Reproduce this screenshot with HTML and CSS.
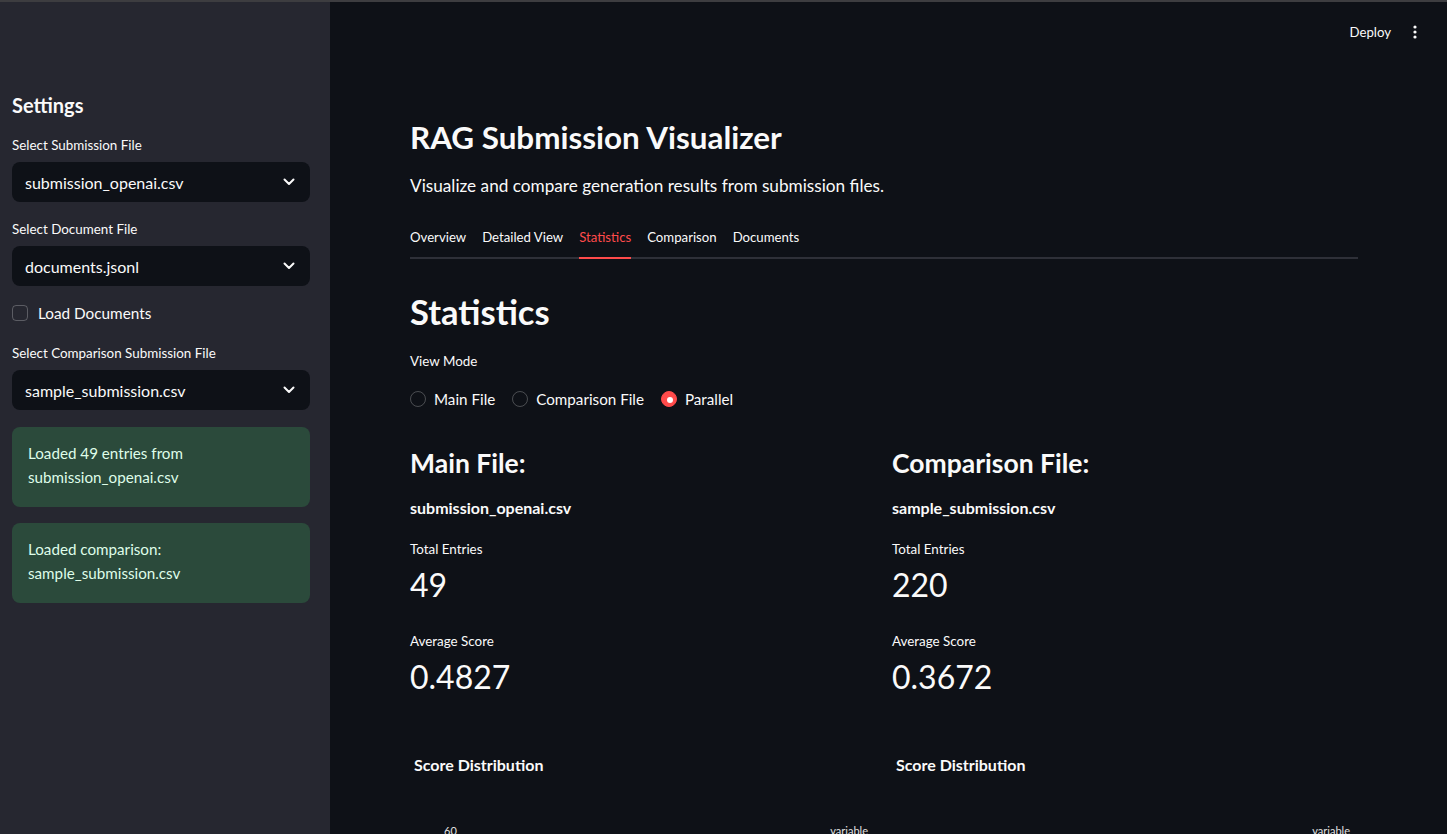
FILE: index.html
```html
<!DOCTYPE html>
<html>
<head>
<meta charset="utf-8">
<link rel="stylesheet" href="styles.css">
</head>
<body>
<div class="topline"></div>
<div class="app">
  <aside class="sidebar">
    <h2 class="side-title">Settings</h2>
    <div class="field">
      <div class="label">Select Submission File</div>
      <div class="select"><span>submission_openai.csv</span>
        <svg class="chev" width="12" height="8" viewBox="0 0 12 8"><path d="M1.5 1.5 L6 6 L10.5 1.5" fill="none" stroke="#fafafa" stroke-width="2" stroke-linecap="round" stroke-linejoin="round"/></svg>
      </div>
    </div>
    <div class="field">
      <div class="label">Select Document File</div>
      <div class="select"><span>documents.jsonl</span>
        <svg class="chev" width="12" height="8" viewBox="0 0 12 8"><path d="M1.5 1.5 L6 6 L10.5 1.5" fill="none" stroke="#fafafa" stroke-width="2" stroke-linecap="round" stroke-linejoin="round"/></svg>
      </div>
    </div>
    <label class="checkbox"><span class="box"></span><span>Load Documents</span></label>
    <div class="field">
      <div class="label">Select Comparison Submission File</div>
      <div class="select"><span>sample_submission.csv</span>
        <svg class="chev" width="12" height="8" viewBox="0 0 12 8"><path d="M1.5 1.5 L6 6 L10.5 1.5" fill="none" stroke="#fafafa" stroke-width="2" stroke-linecap="round" stroke-linejoin="round"/></svg>
      </div>
    </div>
    <div class="success">Loaded 49 entries from submission_openai.csv</div>
    <div class="success">Loaded comparison: sample_submission.csv</div>
  </aside>
  <main class="main">
    <header class="header">
      <span class="deploy">Deploy</span>
      <svg class="kebab" width="4" height="14" viewBox="0 0 4 14"><circle cx="2" cy="2" r="1.6" fill="#fafafa"/><circle cx="2" cy="7" r="1.6" fill="#fafafa"/><circle cx="2" cy="12" r="1.6" fill="#fafafa"/></svg>
    </header>
    <div class="content">
      <h1 class="title">RAG Submission Visualizer</h1>
      <p class="subtitle">Visualize and compare generation results from submission files.</p>
      <nav class="tabs">
        <span class="tab">Overview</span>
        <span class="tab">Detailed View</span>
        <span class="tab active">Statistics</span>
        <span class="tab">Comparison</span>
        <span class="tab">Documents</span>
      </nav>
      <h1 class="section">Statistics</h1>
      <div class="label main-label">View Mode</div>
      <div class="radios">
        <span class="radio"><span class="circle"></span>Main File</span>
        <span class="radio"><span class="circle"></span>Comparison File</span>
        <span class="radio"><span class="circle on"></span>Parallel</span>
      </div>
      <div class="cols">
        <div class="col">
          <h3 class="col-title">Main File:</h3>
          <div class="fname">submission_openai.csv</div>
          <div class="metric-label">Total Entries</div>
          <div class="metric-value">49</div>
          <div class="metric-label avg">Average Score</div>
          <div class="metric-value">0.4827</div>
          <div class="chart">
            <div class="chart-title">Score Distribution</div>
            <div class="chart-axis"><span class="tick">60</span><span class="legend">variable</span></div>
          </div>
        </div>
        <div class="col">
          <h3 class="col-title">Comparison File:</h3>
          <div class="fname">sample_submission.csv</div>
          <div class="metric-label">Total Entries</div>
          <div class="metric-value">220</div>
          <div class="metric-label avg">Average Score</div>
          <div class="metric-value">0.3672</div>
          <div class="chart">
            <div class="chart-title">Score Distribution</div>
            <div class="chart-axis"><span class="tick"></span><span class="legend">variable</span></div>
          </div>
        </div>
      </div>
    </div>
  </main>
</div>
</body>
</html>
```

FILE: styles.css
```css
* { box-sizing: border-box; }
html, body { margin: 0; padding: 0; height: 100%; overflow: hidden; }
body {
  background: #0e1117;
  color: #fafafa;
  font-family: Lato, "Noto Sans", sans-serif;
}
.topline { height: 2px; background: #3d3d40; }
.app { display: flex; height: 832px; overflow: hidden; }

/* Sidebar */
.sidebar {
  width: 330px;
  flex: none;
  background: #262730;
  padding: 88px 20px 0 12px;
  display: flex;
  flex-direction: column;
}
.side-title { font-size: 20px; font-weight: 700; margin: 0 0 15px; line-height: 30px; height: 30px; }
.field { margin-bottom: 17px; }
.label { font-size: 13.4px; line-height: 20px; margin-bottom: 7px; }
.select {
  height: 40px;
  background: #0e1117;
  border-radius: 8px;
  display: flex;
  align-items: center;
  justify-content: space-between;
  padding: 0 15px 0 13px;
  font-size: 16px;
}
.checkbox { display: flex; align-items: center; gap: 10px; font-size: 15.3px; height: 24px; margin: -2px 0 18px; }
.checkbox .box { width: 16px; height: 16px; border: 1px solid rgba(250,250,250,0.25); border-radius: 4px; }
.success {
  background: #2b4a3b;
  color: #dffde9;
  border-radius: 8px;
  padding: 14px 60px 14px 16px;
  font-size: 15.2px;
  line-height: 24px;
  height: 80px;
  margin-bottom: 16px;
}

/* Main */
.main { flex: 1; display: flex; flex-direction: column; min-width: 0; }
.header { flex: none; height: 60px; display: flex; align-items: center; justify-content: flex-end; padding-right: 30px; gap: 22px; }
.deploy { font-size: 13.2px; }
.content { flex: none; padding: 55px 89px 0 80px; }
.title { font-size: 31.4px; font-weight: 700; margin: 0; line-height: 40px; }
.subtitle { font-size: 17.2px; margin: 17px 0 0; line-height: 24px; }
.tabs { display: flex; gap: 16px; border-bottom: 2px solid #2e3038; height: 42px; margin-top: 19px; }
.tab { font-size: 13.2px; display: flex; align-items: center; border-bottom: 2px solid transparent; margin-bottom: -2px; }
.tab.active { color: #ff4b4b; border-bottom-color: #ff4b4b; }
.section { font-size: 34.5px; font-weight: 700; margin: 29px 0 0; line-height: 48px; }
.main-label { margin: 15px 0 0; }
.radios { display: flex; gap: 17px; font-size: 15.2px; height: 24px; align-items: center; margin-top: 16px; }
.radio { display: flex; align-items: center; gap: 8px; }
.circle { width: 16px; height: 16px; border-radius: 50%; border: 1px solid rgba(250,250,250,0.25); display: inline-block; flex: none; }
.circle.on { background: #ff4b4b; border-color: #ff4b4b; position: relative; }
.circle.on::after { content: ""; position: absolute; left: 5px; top: 5px; width: 6px; height: 6px; background: #fff; border-radius: 50%; }

.cols { display: flex; gap: 16px; margin-top: 32px; }
.col { flex: 1; }
.col-title { font-size: 26.5px; font-weight: 700; margin: 0; line-height: 40px; }
.fname { font-size: 16px; font-weight: 700; line-height: 24px; margin-top: 13px; }
.metric-label { font-size: 13.4px; line-height: 20px; margin-top: 19px; }
.metric-label.avg { margin-top: 24px; }
.metric-value { font-size: 32px; line-height: 44px; margin-top: 4px; }
.chart { margin-top: 56px; }
.chart-title { font-size: 16px; font-weight: 700; padding-left: 4px; line-height: 20px; }
.chart-axis { display: flex; justify-content: space-between; margin-top: 49px; font-size: 11px; line-height: 14px; color: #e0e0e0; padding: 0 0 0 34px; }
.tick { width: 20px; }
.legend { margin-right: 8px; }
```
